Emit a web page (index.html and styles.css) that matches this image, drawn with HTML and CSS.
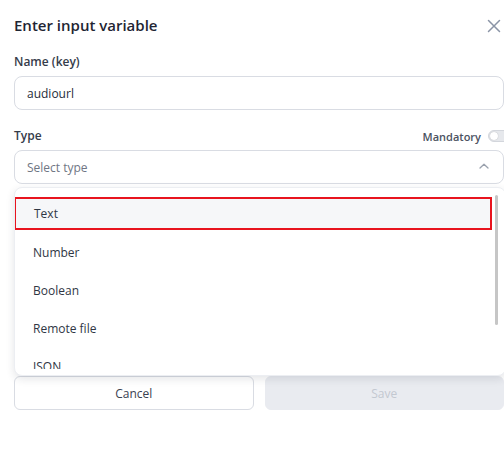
FILE: index.html
```html
<!DOCTYPE html>
<html lang="en">
<head>
<meta charset="utf-8">
<title>Enter input variable</title>
<link rel="stylesheet" href="styles.css">
</head>
<body>
<div class="modal">
  <div class="header">
    <h1 class="title">Enter input variable</h1>
    <svg class="close" width="14" height="14" viewBox="0 0 14 14"><path d="M1.5 1.5L12.5 12.5M12.5 1.5L1.5 12.5" stroke="#8a94a6" stroke-width="1.5" stroke-linecap="round" fill="none"/></svg>
  </div>
  <div class="label">Name (key)</div>
  <div class="field"><span class="value">audiourl</span></div>
  <div class="label-row">
    <div class="label">Type</div>
    <div class="mandatory">
      <span class="mandatory-text">Mandatory</span>
      <span class="toggle"><span class="knob"></span></span>
    </div>
  </div>
  <div class="select-wrap">
    <div class="field select">
      <span class="placeholder">Select type</span>
      <svg class="chevron" width="10" height="6" viewBox="0 0 10 6"><path d="M1 5L5 1.2L9 5" stroke="#9aa1ad" stroke-width="1.3" fill="none" stroke-linecap="round" stroke-linejoin="round"/></svg>
    </div>
    <div class="dropdown">
      <ul class="options">
        <li class="option active">Text</li>
        <li class="option">Number</li>
        <li class="option">Boolean</li>
        <li class="option">Remote file</li>
        <li class="option">JSON</li>
      </ul>
      <div class="scrollbar"><div class="thumb"></div></div>
    </div>
  </div>
  <div class="actions">
    <button class="btn cancel">Cancel</button>
    <button class="btn save">Save</button>
  </div>
</div>
</body>
</html>
```
FILE: styles.css
```css
* { box-sizing: border-box; }
html, body { margin: 0; padding: 0; background: #ffffff; }
body {
  font-family: "Open Sans", "Noto Sans", "Liberation Sans", sans-serif;
  width: 504px;
  height: 450px;
  overflow: hidden;
}
.modal {
  padding: 14px 0 0 14px;
  width: 504px;
}
.header {
  display: flex;
  align-items: center;
  justify-content: space-between;
  height: 22px;
  padding-right: 3px;
}
.title {
  margin: 0;
  font-size: 15px;
  font-weight: 600;
  color: #1f2533;
}
.close { margin-top: 2px; }
.label {
  font-size: 12px;
  font-weight: 600;
  color: #353c4a;
  line-height: 16px;
}
.header + .label { margin-top: 18px; }
.field {
  margin-top: 6px;
  height: 34px;
  border: 1px solid #d9dce3;
  border-radius: 8px;
  display: flex;
  align-items: center;
  padding: 0 12px;
  font-size: 12px;
}
.value { color: #262d3a; }
.label-row {
  margin-top: 18px;
  display: flex;
  justify-content: space-between;
  align-items: center;
  height: 16px;
}
.mandatory {
  display: flex;
  align-items: center;
  gap: 7px;
}
.mandatory-text {
  font-size: 11px;
  font-weight: 600;
  color: #4b5261;
}
.toggle {
  width: 22px;
  height: 12px;
  border-radius: 6px;
  background: #e6e8ec;
  border: 1px solid #d3d6dc;
  display: flex;
  align-items: center;
  padding-left: 1px;
  margin-right: -6px;
}
.knob {
  width: 8px;
  height: 8px;
  border-radius: 50%;
  background: #ffffff;
  box-shadow: 0 0 1px rgba(0,0,0,0.3);
}
.select-wrap { position: relative; }
.select {
  justify-content: space-between;
  padding-right: 14px;
}
.placeholder { color: #6f7684; }
.chevron { margin-top: -2px; }
.dropdown {
  position: absolute;
  left: 0;
  top: 37px;
  width: 492px;
  height: 189px;
  background: #ffffff;
  border: 1px solid #eceef2;
  border-radius: 8px;
  box-shadow: 0 3px 8px rgba(30, 40, 60, 0.12);
  display: flex;
  align-items: flex-start;
  overflow: hidden;
}
.options {
  list-style: none;
  margin: 0;
  padding: 9px 0 0 0;
  flex: 1;
  height: 181px;
  overflow: hidden;
}
.option {
  height: 38px;
  line-height: 38px;
  padding-left: 18px;
  font-size: 12px;
  color: #2f3644;
}
.option.active {
  height: 33px;
  line-height: 29px;
  margin-left: -1px;
  margin-bottom: 4px;
  border: 2px solid #e8141e;
  background: #f6f7f9;
}
.scrollbar {
  width: 13px;
  padding: 7px 0 0 3px;
}
.thumb {
  width: 3px;
  height: 130px;
  border-radius: 2px;
  background: #c6c6c6;
}
.actions {
  margin-top: 192px;
  display: flex;
  gap: 11px;
}
.btn {
  font-family: inherit;
  height: 34px;
  border-radius: 6px;
  font-size: 12px;
  font-weight: 500;
  cursor: pointer;
}
.cancel {
  width: 240px;
  background: #ffffff;
  border: 1px solid #d9dce3;
  color: #3a4150;
}
.save {
  width: 240px;
  background: #e9ebf0;
  border: 1px solid #e9ebf0;
  color: #c3c8d1;
}
```
